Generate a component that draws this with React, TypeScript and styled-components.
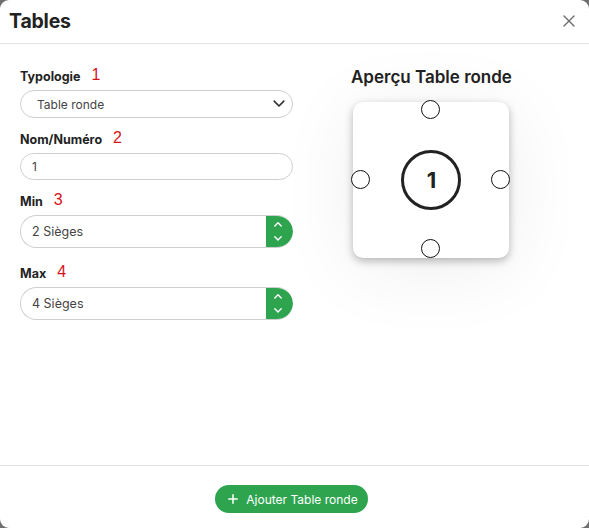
import React from "react";
import styled, { createGlobalStyle } from "styled-components";

const GlobalStyle = createGlobalStyle`
  html, body { margin: 0; padding: 0; }
  body {
    background: #6f6f6f;
    font-family: Inter, "Noto Sans", "Liberation Sans", sans-serif;
    color: #212529;
  }
  * { box-sizing: border-box; }
`;

const Modal = styled.div`
  width: 589px;
  height: 528px;
  background: #fff;
  border-radius: 9px;
  display: flex;
  flex-direction: column;
  overflow: hidden;
`;

const Header = styled.div`
  height: 44px;
  flex: none;
  border-bottom: 1px solid #e3e3e3;
  display: flex;
  align-items: center;
  justify-content: space-between;
  padding: 0 13px 2px 9px;
`;

const Title = styled.h1`
  margin: 0;
  font-size: 19.5px;
  font-weight: 700;
  letter-spacing: -0.2px;
  color: #222;
`;

const CloseButton = styled.button`
  border: none;
  background: none;
  padding: 0;
  width: 14px;
  height: 14px;
  display: flex;
  align-items: center;
  justify-content: center;
  color: #6b6b6b;
  cursor: pointer;
`;

const Body = styled.div`
  flex: 1;
  display: grid;
  grid-template-columns: 273px auto;
  column-gap: 58px;
  align-items: start;
  padding: 24px 20px 0 20px;
`;

const Form = styled.div`
  display: flex;
  flex-direction: column;
`;

const Field = styled.div<{ $after?: number }>`
  display: flex;
  flex-direction: column;
  margin-bottom: ${(p) => p.$after ?? 13}px;
`;

const LabelRow = styled.div`
  display: flex;
  align-items: center;
  height: 16px;
  margin-bottom: 6px;
`;

const Label = styled.label`
  font-size: 12.5px;
  font-weight: 700;
  color: #222;
`;

const Marker = styled.span`
  margin-left: 11px;
  font-size: 16px;
  font-family: "Liberation Sans", Arial, sans-serif;
  color: #d4141c;
  line-height: 1;
  position: relative;
  top: -1px;
`;

const SelectBox = styled.div`
  height: 28px;
  border: 1px solid #cfcfcf;
  border-radius: 14px;
  display: flex;
  align-items: center;
  justify-content: space-between;
  padding: 0 7px 0 16px;
  font-size: 12px;
  color: #444;
`;

const TextBox = styled.div`
  height: 27px;
  border: 1px solid #cfcfcf;
  border-radius: 14px;
  display: flex;
  align-items: center;
  padding: 0 11px;
  font-size: 12px;
  color: #444;
`;

const NumberBox = styled.div`
  height: 33px;
  border: 1px solid #cfcfcf;
  border-right: none;
  border-radius: 17px;
  display: flex;
  align-items: stretch;
  overflow: hidden;
`;

const NumberValue = styled.div`
  flex: 1;
  display: flex;
  align-items: center;
  padding: 0 11px;
  font-size: 12.5px;
  color: #444;
`;

const Spinner = styled.div`
  width: 27px;
  background: #2fa44f;
  border-radius: 0 17px 17px 0;
  margin: -1px 0;
  display: flex;
  flex-direction: column;
  align-items: center;
  justify-content: center;
  gap: 9px;
  padding-right: 3px;
`;

const Preview = styled.div`
  display: inline-flex;
  flex-direction: column;
  align-items: center;
  justify-self: start;
  margin-top: -2px;
`;

const PreviewTitle = styled.h2`
  margin: 0 0 14px 0;
  height: 22px;
  line-height: 22px;
  font-size: 17px;
  font-weight: 600;
  color: #222;
  white-space: nowrap;
`;

const TableCard = styled.div`
  position: relative;
  width: 156px;
  height: 156px;
  background: #fff;
  border-radius: 10px;
  box-shadow: 0 3px 8px rgba(0, 0, 0, 0.28), 0 10px 80px rgba(0, 0, 0, 0.07);
  display: flex;
  align-items: center;
  justify-content: center;
`;

const TableTop = styled.div`
  width: 60px;
  height: 60px;
  border: 3px solid #222;
  border-radius: 50%;
  display: flex;
  align-items: center;
  justify-content: center;
  font-size: 22px;
  font-weight: 700;
  color: #222;
`;

const Seat = styled.div<{ $x: number; $y: number }>`
  position: absolute;
  left: ${(p) => p.$x}px;
  top: ${(p) => p.$y}px;
  width: 19px;
  height: 19px;
  margin: -9.5px 0 0 -9.5px;
  border: 1.2px solid #111;
  border-radius: 50%;
  background: #fff;
`;

const Footer = styled.div`
  height: 63px;
  flex: none;
  border-top: 1px solid #e3e3e3;
  display: flex;
  justify-content: center;
  align-items: flex-start;
  padding-top: 19px;
`;

const AddButton = styled.button`
  height: 28px;
  border: none;
  border-radius: 14px;
  background: #2fa44f;
  color: #fff;
  font-family: inherit;
  font-size: 12px;
  display: flex;
  align-items: center;
  gap: 8px;
  padding: 0 10px 0 13px;
  margin-right: 6px;
  cursor: pointer;
`;

const Chevron = ({ dir, size, color, stroke }: { dir: "up" | "down"; size: number; color: string; stroke: number }) => (
  <svg width={size} height={size * 0.6} viewBox="0 0 10 6" fill="none" overflow="visible">
    <path
      d={dir === "down" ? "M1 1 L5 5 L9 1" : "M1 5 L5 1 L9 5"}
      stroke={color}
      strokeWidth={stroke}
      strokeLinecap="round"
      strokeLinejoin="round"
    />
  </svg>
);

const NumberField = ({ value }: { value: string }) => (
  <NumberBox>
    <NumberValue>{value}</NumberValue>
    <Spinner>
      <Chevron dir="up" size={8} color="#fff" stroke={1.8} />
      <Chevron dir="down" size={8} color="#fff" stroke={1.8} />
    </Spinner>
  </NumberBox>
);

export default function App() {
  const seats = [
    { x: 77, y: 7 },
    { x: 7, y: 77 },
    { x: 147, y: 77 },
    { x: 77, y: 146 },
  ];
  return (
    <>
      <GlobalStyle />
      <Modal>
        <Header>
          <Title>Tables</Title>
          <CloseButton aria-label="Fermer">
            <svg width="12" height="12" viewBox="0 0 12 12">
              <path d="M1 1 L11 11 M11 1 L1 11" stroke="currentColor" strokeWidth="1.4" strokeLinecap="round" />
            </svg>
          </CloseButton>
        </Header>
        <Body>
          <Form>
            <Field>
              <LabelRow>
                <Label>Typologie</Label>
                <Marker>1</Marker>
              </LabelRow>
              <SelectBox>
                <span>Table ronde</span>
                <Chevron dir="down" size={12} color="#333" stroke={1.4} />
              </SelectBox>
            </Field>
            <Field>
              <LabelRow>
                <Label>Nom/Numéro</Label>
                <Marker>2</Marker>
              </LabelRow>
              <TextBox>1</TextBox>
            </Field>
            <Field $after={17}>
              <LabelRow>
                <Label>Min</Label>
                <Marker>3</Marker>
              </LabelRow>
              <NumberField value="2 Sièges" />
            </Field>
            <Field>
              <LabelRow>
                <Label>Max</Label>
                <Marker>4</Marker>
              </LabelRow>
              <NumberField value="4 Sièges" />
            </Field>
          </Form>
          <Preview>
            <PreviewTitle>Aperçu Table ronde</PreviewTitle>
            <TableCard>
              <TableTop>1</TableTop>
              {seats.map((s, i) => (
                <Seat key={i} $x={s.x} $y={s.y} />
              ))}
            </TableCard>
          </Preview>
        </Body>
        <Footer>
          <AddButton>
            <svg width="10" height="10" viewBox="0 0 10 10">
              <path d="M5 0.8 V9.2 M0.8 5 H9.2" stroke="#fff" strokeWidth="1.5" strokeLinecap="round" />
            </svg>
            Ajouter Table ronde
          </AddButton>
        </Footer>
      </Modal>
    </>
  );
}
